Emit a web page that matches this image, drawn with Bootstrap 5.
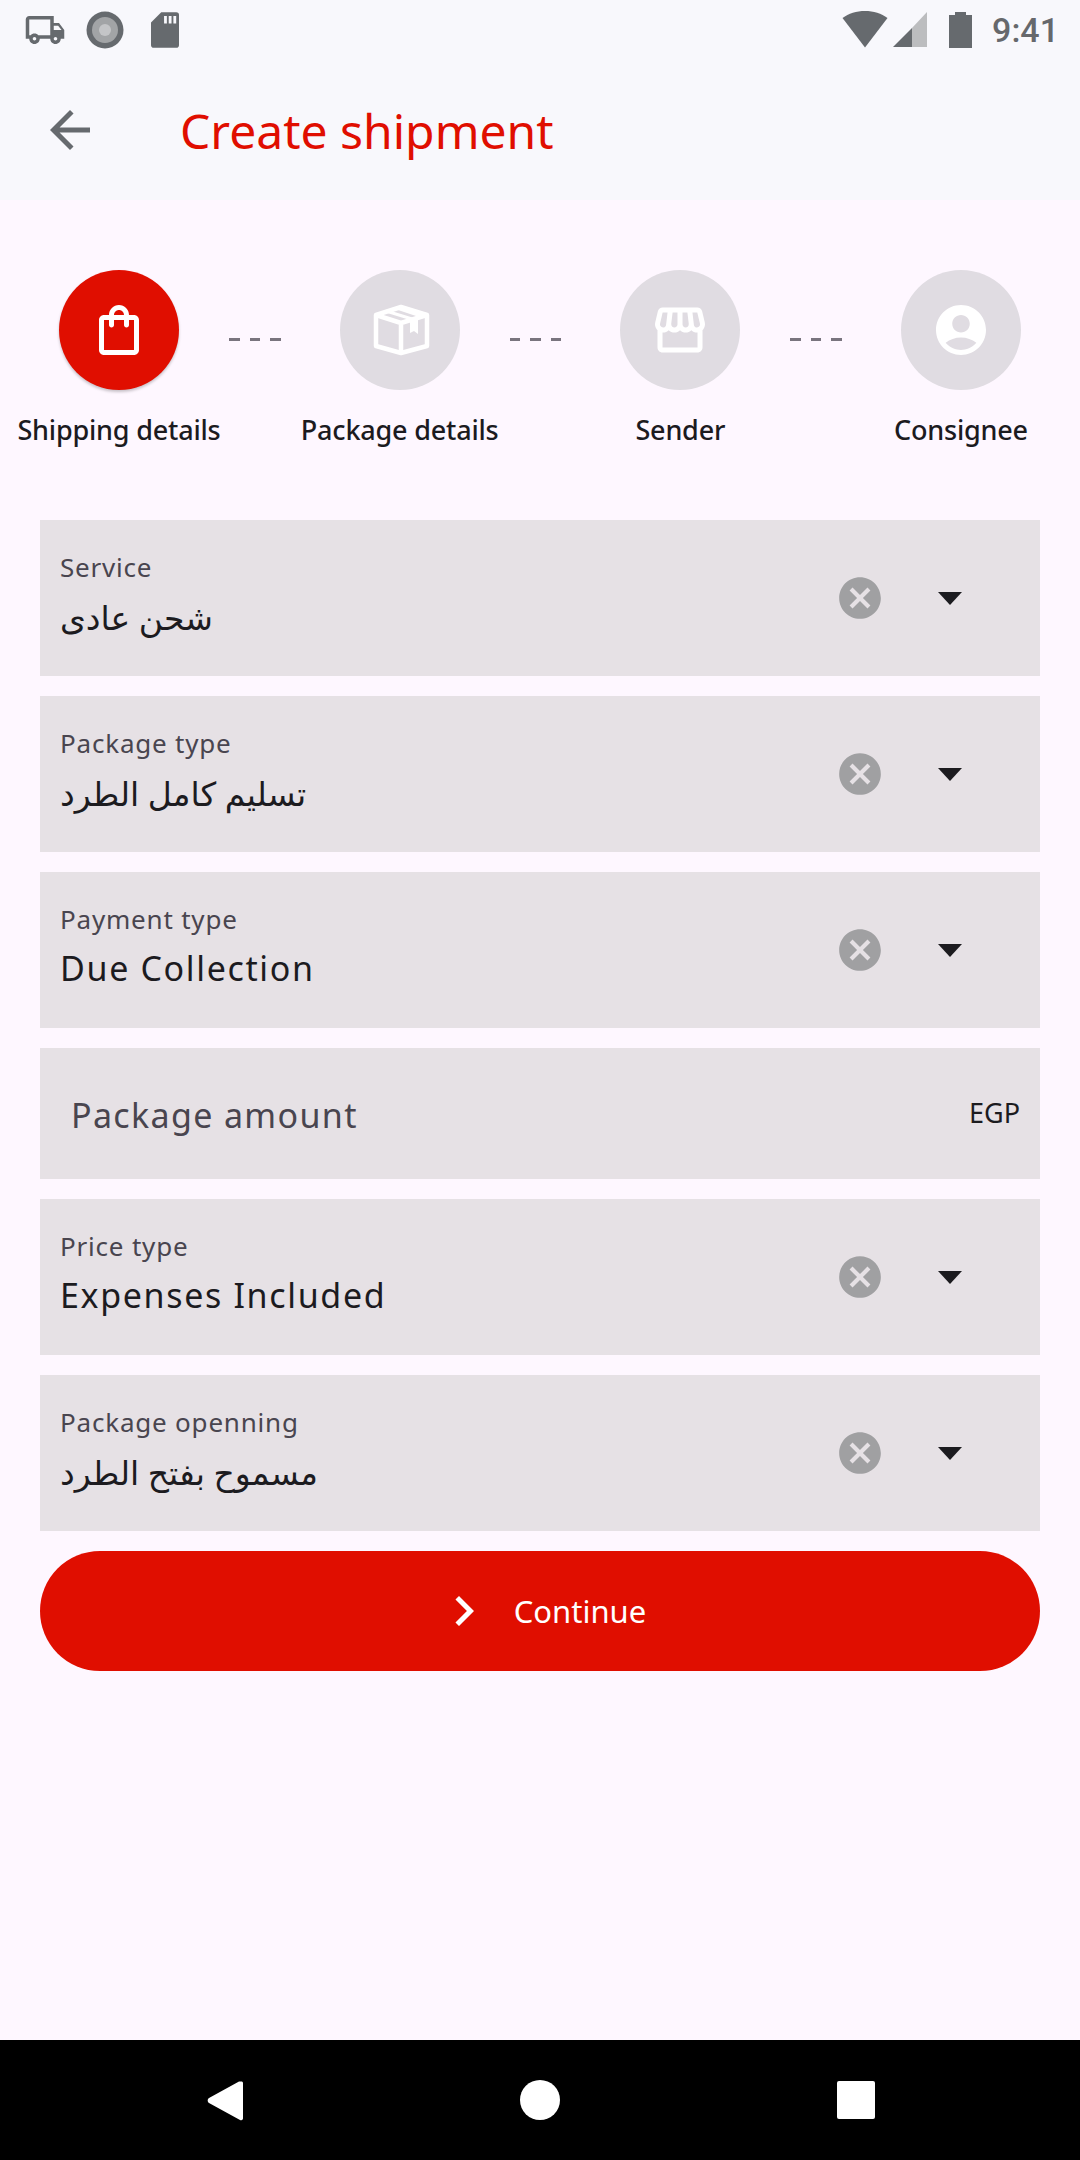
<!DOCTYPE html>
<html lang="en">
<head>
<meta charset="utf-8">
<title>Create shipment</title>
<link href="https://cdn.jsdelivr.net/npm/bootstrap@5.3.0/dist/css/bootstrap.min.css" rel="stylesheet">
<style>
html,body{height:2160px;overflow:hidden}
body{background:#fef7ff;font-family:"Noto Sans","DejaVu Sans",sans-serif;color:#1c1b1f}
.phone{height:2160px}
.topzone{height:200px;background:#f8f8fc}
.statusrow{height:60px;padding:0 21px 0 24px}
.ico-g{fill:#666a6e}
.gap-disc{margin-left:20px}
.gap-sd{margin-left:27px}
.clock{font-family:Roboto,sans-serif;font-weight:500;font-size:34px;color:#66686c;line-height:60px;margin-left:20px}
.barrow{height:140px;padding-left:40px}
.apptitle{font-size:48px;color:#e00e00;margin:2px 0 0 80px;font-weight:400;line-height:60px}
.stepsrow{padding:70px 0 0 59px}
.stepcol{width:120px}
.stepdisc{width:120px;height:120px;background:#e0dce2}
.stepdisc.on{background:#e00e00;box-shadow:0 2px 3px rgba(0,0,0,.22)}
.steplabel{white-space:nowrap;font-size:27px;font-weight:500;line-height:36px;margin-top:22px;letter-spacing:-.2px}
.linker{width:160.67px;height:120px;padding:68px 0 0 50px}
.linker i{width:10.5px;height:3px;background:#79747e;margin-right:10px}
.formzone{padding:72px 40px 0 40px;gap:20px}
.fld{height:156px;background:#e6e1e5}
.fld.short{height:131px}
.fldtext{padding:30px 0 0 20px}
.fldlabel{font-size:26px;line-height:34px;color:#49454f;letter-spacing:.8px}
.fldvalue{font-size:34px;line-height:50px;margin-top:7px;letter-spacing:1.65px}
.fldvalue.ar{font-size:33px;margin-top:9px;letter-spacing:0}
.clearx{fill:#a0a0a2;width:50px;height:50px}
.caretbox{width:24px;height:13px;fill:#1c1b1f;margin:0 78px 0 53px}
.amt{font-size:34px;color:#49454f;padding:3px 0 0 31px;letter-spacing:1.35px}
.cur{font-size:27px;padding-right:20px}
.gobtn{height:120px;width:1000px;background:#e00e00;border:0;border-radius:60px;color:#fff;font-size:31px;padding:0;--bs-btn-hover-bg:#e00e00;--bs-btn-hover-color:#fff}
.gobtn svg{width:60px;height:60px;fill:#fff;margin-right:20px}
.sysnav{height:120px;background:#000;margin-top:auto}
.sysnav svg{fill:#fff;position:absolute;top:0}
</style>
</head>
<body>
<div class="phone d-flex flex-column">
  <header class="topzone">
    <div class="statusrow d-flex align-items-center">
      <svg class="ico-g" width="42" height="42" viewBox="0 0 24 24"><path d="M20 8h-3V4H3c-1.1 0-2 .9-2 2v11h2c0 1.66 1.34 3 3 3s3-1.34 3-3h6c0 1.66 1.34 3 3 3s3-1.34 3-3h2v-5l-3-4zm-.5 1.5l1.96 2.5H17V9.5h2.5zM6 18c-.55 0-1-.45-1-1s.45-1 1-1 1 .45 1 1-.45 1-1 1zm2.22-3c-.55-.61-1.33-1-2.22-1s-1.67.39-2.22 1H3V6h12v9H8.22zM18 18c-.55 0-1-.45-1-1s.45-1 1-1 1 .45 1 1-.45 1-1 1z"/></svg>
      <svg class="gap-disc" width="38" height="38" viewBox="0 0 38 38"><circle cx="19" cy="19" r="18.5" fill="#666a6e"/><circle cx="19" cy="19" r="13" fill="#a2a4a6"/><circle cx="19" cy="19" r="6" fill="#c4c5c7"/></svg>
      <svg class="ico-g gap-sd" width="28" height="36" viewBox="0 0 30 38"><path d="M11 0h16a3 3 0 0 1 3 3v32a3 3 0 0 1-3 3H3a3 3 0 0 1-3-3V11z"/><path d="M14 4h3v8h-3zM19 4h3v8h-3zM24 4h3v8h-3z" fill="#f8f8fc"/></svg>
      <div class="ms-auto d-flex align-items-center">
        <svg width="130" height="38" viewBox="0 0 130 38"><path d="M23 36.500 0.500 7C6.500 2.500 14.500 0 23 0s16.500 2.500 22.500 7z" class="ico-g"/><path d="M51 36 70 17v19z" class="ico-g"/><path d="M70 17 85 1v35H70z" fill="#bcbdbf"/><path d="M107 4h6V1h11v3h6v33h-23z" class="ico-g"/></svg>
        <span class="clock">9:41</span>
      </div>
    </div>
    <div class="barrow d-flex align-items-center">
      <svg class="ico-g" width="60" height="60" viewBox="0 0 24 24"><path d="M20 11H7.830l5.590-5.590L12 4l-8 8 8 8 1.410-1.410L7.830 13H20v-2z"/></svg>
      <h1 class="apptitle">Create shipment</h1>
    </div>
  </header>

  <section class="stepsrow d-flex">
    <div class="stepcol d-flex flex-column align-items-center">
      <div class="stepdisc on rounded-circle d-flex align-items-center justify-content-center">
        <svg width="60" height="60" viewBox="0 0 24 24" fill="#fff"><path d="M18 6h-2c0-2.210-1.790-4-4-4S8 3.790 8 6H6c-1.100 0-2 .9-2 2v12c0 1.100.9 2 2 2h12c1.100 0 2-.9 2-2V8c0-1.100-.9-2-2-2zm-6-2c1.100 0 2 .9 2 2h-4c0-1.100.9-2 2-2zm6 16H6V8h2v2c0 .55.45 1 1 1s1-.45 1-1V8h4v2c0 .55.45 1 1 1s1-.45 1-1V8h2v12z"/></svg>
      </div>
      <div class="steplabel">Shipping details</div>
    </div>
    <div class="linker d-flex"><i></i><i></i><i></i></div>
    <div class="stepcol d-flex flex-column align-items-center">
      <div class="stepdisc rounded-circle d-flex align-items-center justify-content-center">
        <svg width="60" height="60" viewBox="0 0 60 60" fill="none" stroke="#fff" stroke-width="4.500" stroke-linejoin="round"><path d="M31 7 6 15v31l25 7 26-7V15z"/><path d="M6 15l25 8 26-8M31 23v30"/><path d="M16 11l26 8M27 8l24 8" stroke-width="3"/><path d="M40 21v12l4-2 4 3V18z" fill="#fff" stroke="none"/></svg>
      </div>
      <div class="steplabel">Package details</div>
    </div>
    <div class="linker d-flex"><i></i><i></i><i></i></div>
    <div class="stepcol d-flex flex-column align-items-center">
      <div class="stepdisc rounded-circle d-flex align-items-center justify-content-center">
        <svg width="60" height="60" viewBox="0 0 24 24" fill="#fff"><path d="M21.900 8.890l-1.050-4.370c-.22-.9-1-1.520-1.910-1.520H5.050c-.9 0-1.690.63-1.900 1.520L2.100 8.890c-.24 1.020-.02 2.060.62 2.880.08.11.19.19.28.29V19c0 1.100.9 2 2 2h14c1.100 0 2-.9 2-2v-6.940c.09-.09.2-.18.28-.28.64-.82.87-1.870.62-2.890zm-2.990-3.900l1.050 4.370c.1.42.01.84-.25 1.170-.14.18-.44.47-.94.47-.61 0-1.140-.49-1.210-1.140L16.980 5l1.930-.01zM13 5h1.960l.54 4.520c.05.39-.07.78-.33 1.070-.22.26-.54.41-.95.41-.67 0-1.220-.59-1.220-1.310V5zM8.490 9.520L9.040 5H11v4.690c0 .72-.55 1.310-1.290 1.310-.34 0-.65-.15-.89-.41-.25-.29-.37-.68-.33-1.070zm-4.450-.16L5.050 5h1.970l-.58 4.860c-.08.65-.6 1.140-1.210 1.140-.49 0-.8-.29-.93-.47-.27-.32-.36-.75-.26-1.170zM5 19v-6.030c.08.01.15.03.23.03.87 0 1.660-.36 2.240-.95.6.6 1.400.95 2.310.95.87 0 1.650-.36 2.230-.93.59.57 1.390.93 2.290.93.84 0 1.640-.35 2.240-.95.58.59 1.370.95 2.240.95.08 0 .15-.02.23-.03V19H5z"/></svg>
      </div>
      <div class="steplabel">Sender</div>
    </div>
    <div class="linker d-flex"><i></i><i></i><i></i></div>
    <div class="stepcol d-flex flex-column align-items-center">
      <div class="stepdisc rounded-circle d-flex align-items-center justify-content-center">
        <svg width="60" height="60" viewBox="0 0 24 24" fill="#fff" fill-rule="evenodd"><path d="M12 2C6.480 2 2 6.480 2 12s4.480 10 10 10 10-4.480 10-10S17.520 2 12 2zm0 4c1.930 0 3.500 1.570 3.500 3.500S13.930 13 12 13s-3.500-1.570-3.500-3.500S10.070 6 12 6zm0 14c-2.030 0-4.430-.82-6.140-2.880C7.550 15.800 9.680 15 12 15s4.450.8 6.140 2.120C16.430 19.180 14.030 20 12 20z"/></svg>
      </div>
      <div class="steplabel">Consignee</div>
    </div>
  </section>

  <main class="formzone d-flex flex-column">
    <div class="fld d-flex align-items-center">
      <div class="fldtext flex-grow-1 align-self-start"><div class="fldlabel">Service</div><div class="fldvalue ar">شحن عادى</div></div>
      <svg class="clearx" viewBox="0 0 24 24"><path d="M12 2C6.470 2 2 6.470 2 12s4.470 10 10 10 10-4.470 10-10S17.530 2 12 2zm5 13.590L15.590 17 12 13.410 8.410 17 7 15.590 10.590 12 7 8.410 8.410 7 12 10.590 15.590 7 17 8.410 13.410 12 17 15.590z"/></svg>
      <svg class="caretbox" viewBox="0 0 24 13"><path d="M0 0h24L12 13z"/></svg>
    </div>
    <div class="fld d-flex align-items-center">
      <div class="fldtext flex-grow-1 align-self-start"><div class="fldlabel">Package type</div><div class="fldvalue ar">تسليم كامل الطرد</div></div>
      <svg class="clearx" viewBox="0 0 24 24"><path d="M12 2C6.470 2 2 6.470 2 12s4.470 10 10 10 10-4.470 10-10S17.530 2 12 2zm5 13.590L15.590 17 12 13.410 8.410 17 7 15.590 10.590 12 7 8.410 8.410 7 12 10.590 15.590 7 17 8.410 13.410 12 17 15.590z"/></svg>
      <svg class="caretbox" viewBox="0 0 24 13"><path d="M0 0h24L12 13z"/></svg>
    </div>
    <div class="fld d-flex align-items-center">
      <div class="fldtext flex-grow-1 align-self-start"><div class="fldlabel">Payment type</div><div class="fldvalue">Due Collection</div></div>
      <svg class="clearx" viewBox="0 0 24 24"><path d="M12 2C6.470 2 2 6.470 2 12s4.470 10 10 10 10-4.470 10-10S17.530 2 12 2zm5 13.590L15.590 17 12 13.410 8.410 17 7 15.590 10.590 12 7 8.410 8.410 7 12 10.590 15.590 7 17 8.410 13.410 12 17 15.590z"/></svg>
      <svg class="caretbox" viewBox="0 0 24 13"><path d="M0 0h24L12 13z"/></svg>
    </div>
    <div class="fld short d-flex align-items-center justify-content-between">
      <span class="amt">Package amount</span><span class="cur">EGP</span>
    </div>
    <div class="fld d-flex align-items-center">
      <div class="fldtext flex-grow-1 align-self-start"><div class="fldlabel">Price type</div><div class="fldvalue">Expenses Included</div></div>
      <svg class="clearx" viewBox="0 0 24 24"><path d="M12 2C6.470 2 2 6.470 2 12s4.470 10 10 10 10-4.470 10-10S17.530 2 12 2zm5 13.590L15.590 17 12 13.410 8.410 17 7 15.590 10.590 12 7 8.410 8.410 7 12 10.590 15.590 7 17 8.410 13.410 12 17 15.590z"/></svg>
      <svg class="caretbox" viewBox="0 0 24 13"><path d="M0 0h24L12 13z"/></svg>
    </div>
    <div class="fld d-flex align-items-center">
      <div class="fldtext flex-grow-1 align-self-start"><div class="fldlabel">Package openning</div><div class="fldvalue ar">مسموح بفتح الطرد</div></div>
      <svg class="clearx" viewBox="0 0 24 24"><path d="M12 2C6.470 2 2 6.470 2 12s4.470 10 10 10 10-4.470 10-10S17.530 2 12 2zm5 13.590L15.590 17 12 13.410 8.410 17 7 15.590 10.590 12 7 8.410 8.410 7 12 10.590 15.590 7 17 8.410 13.410 12 17 15.590z"/></svg>
      <svg class="caretbox" viewBox="0 0 24 13"><path d="M0 0h24L12 13z"/></svg>
    </div>
    <button class="btn gobtn d-flex align-items-center justify-content-center" type="button">
      <svg viewBox="0 0 24 24"><path d="M8.590 16.590L13.170 12 8.590 7.410 10 6l6 6-6 6z"/></svg>
      <span>Continue</span>
    </button>
  </main>

  <footer class="sysnav d-flex align-items-center justify-content-around position-relative">
    <svg width="40" height="44" viewBox="0 0 40 44" style="left:205px;top:39px"><path d="M37 2.500a2 2 0 0 1 1 2v35a2 2 0 0 1-3 1.500L4 24a3 3 0 0 1 0-5L34 2.500z"/></svg>
    <svg width="40" height="40" viewBox="0 0 40 40" style="left:520px;top:40px"><circle cx="20" cy="20" r="20"/></svg>
    <svg width="38" height="38" viewBox="0 0 38 38" style="left:837px;top:41px"><rect width="38" height="38" rx="2"/></svg>
  </footer>
</div>
<script src="https://cdn.jsdelivr.net/npm/bootstrap@5.3.0/dist/js/bootstrap.bundle.min.js"></script>
</body>
</html>
